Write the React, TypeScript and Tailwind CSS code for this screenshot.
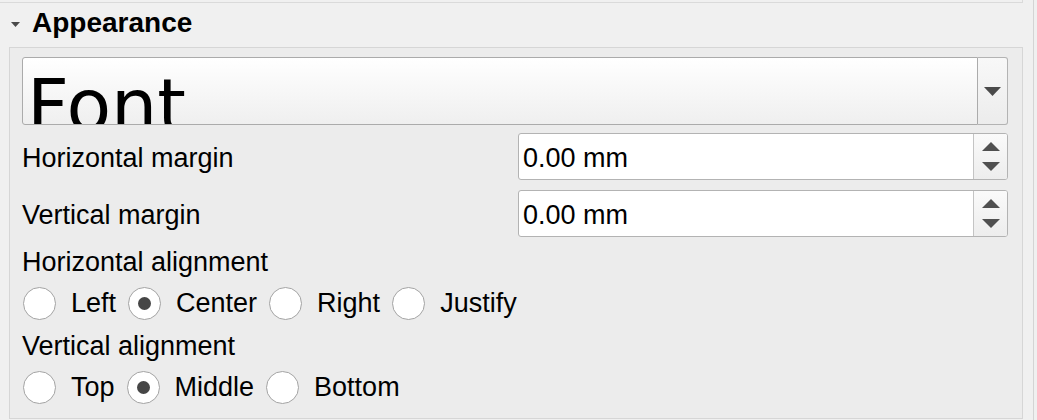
import React from 'react';

const Radio = ({ label, checked = false }: { label: string; checked?: boolean }) => (
  <div className="flex items-center mr-[12px]">
    <div className="w-[33px] h-[33px] rounded-full border border-[#a3a3a3] bg-white flex items-center justify-center">
      {checked && <div className="w-[13px] h-[13px] rounded-full bg-[#464646]" />}
    </div>
    <span className="ml-[15px] pt-[1px]">{label}</span>
  </div>
);

const Arrow = ({ up = false }: { up?: boolean }) => (
  <svg width="18" height="9" viewBox="0 0 18 9">
    <polygon points={up ? '0,9 18,9 9,0' : '0,0 18,0 9,9'} fill="#505050" />
  </svg>
);

const SpinRow = ({ label, value }: { label: string; value: string }) => (
  <div className="flex items-center justify-between h-[47px]">
    <span className="pt-[3px]">{label}</span>
    <div className="flex w-[490px] h-[47px] border border-[#b3b3b3] rounded-[3px] bg-white overflow-hidden">
      <div className="flex-1 flex items-center pl-[4px] pt-[3px]">{value}</div>
      <div className="w-[34px] border-l border-[#c4c4c4] bg-linear-to-b from-[#fafafa] to-[#ededed] flex flex-col items-center justify-center gap-[11px]">
        <Arrow up />
        <Arrow />
      </div>
    </div>
  </div>
);

export default function App() {
  return (
    <div className="w-[1037px] h-[420px] bg-[#f0f0f0] flex overflow-hidden font-['Liberation_Sans',Arial,sans-serif] text-[27px] text-black">
      <div className="w-[1033px] flex flex-col">
        <div className="h-[3px] w-[1023px] border-b border-r border-[#dadada]" />
        <div className="h-[40px] flex items-center">
          <svg className="ml-[11px] mt-[2px]" width="9" height="5" viewBox="0 0 9 5">
            <polygon points="0,0 9,0 4.5,5" fill="#4a4a4a" />
          </svg>
          <span className="ml-[12px] font-bold text-[28px]">Appearance</span>
        </div>
        <div className="mt-[4px] ml-[9px] w-[1014px] h-[372px] border border-[#d6d6d6] bg-[#ececec] pt-[9px] pl-[12px] pr-[14px] flex flex-col">
          <div className="flex h-[68px]">
            <div className="flex-1 border border-[#ababab] rounded-l-[3px] bg-linear-to-b from-white to-[#efefef] overflow-hidden pl-[4px] pt-[11px]">
              <span className="block h-[55px] overflow-hidden font-['DejaVu_Sans',sans-serif] text-[73px] leading-none">Font</span>
            </div>
            <div className="w-[30px] border border-l-0 border-[#b3b3b3] rounded-r-[3px] bg-linear-to-b from-[#f8f8f8] to-[#ececec] flex items-center justify-center">
              <svg width="17" height="9" viewBox="0 0 17 9">
                <polygon points="0,0 17,0 8.5,9" fill="#4a4a4a" />
              </svg>
            </div>
          </div>
          <div className="mt-[8px]">
            <SpinRow label="Horizontal margin" value="0.00 mm" />
          </div>
          <div className="mt-[10px]">
            <SpinRow label="Vertical margin" value="0.00 mm" />
          </div>
          <div className="mt-[5px] h-[40px] leading-[40px]">Horizontal alignment</div>
          <div className="mt-[3px] h-[36px] flex items-center pl-[1px]">
            <Radio label="Left" />
            <Radio label="Center" checked />
            <Radio label="Right" />
            <Radio label="Justify" />
          </div>
          <div className="mt-[5px] h-[40px] leading-[40px]">Vertical alignment</div>
          <div className="mt-[3px] h-[36px] flex items-center pl-[1px]">
            <Radio label="Top" />
            <Radio label="Middle" checked />
            <Radio label="Bottom" />
          </div>
        </div>
      </div>
      <div className="w-[4px] border-l border-[#d4d4d4] bg-[#f0f0f0]" />
    </div>
  );
}
